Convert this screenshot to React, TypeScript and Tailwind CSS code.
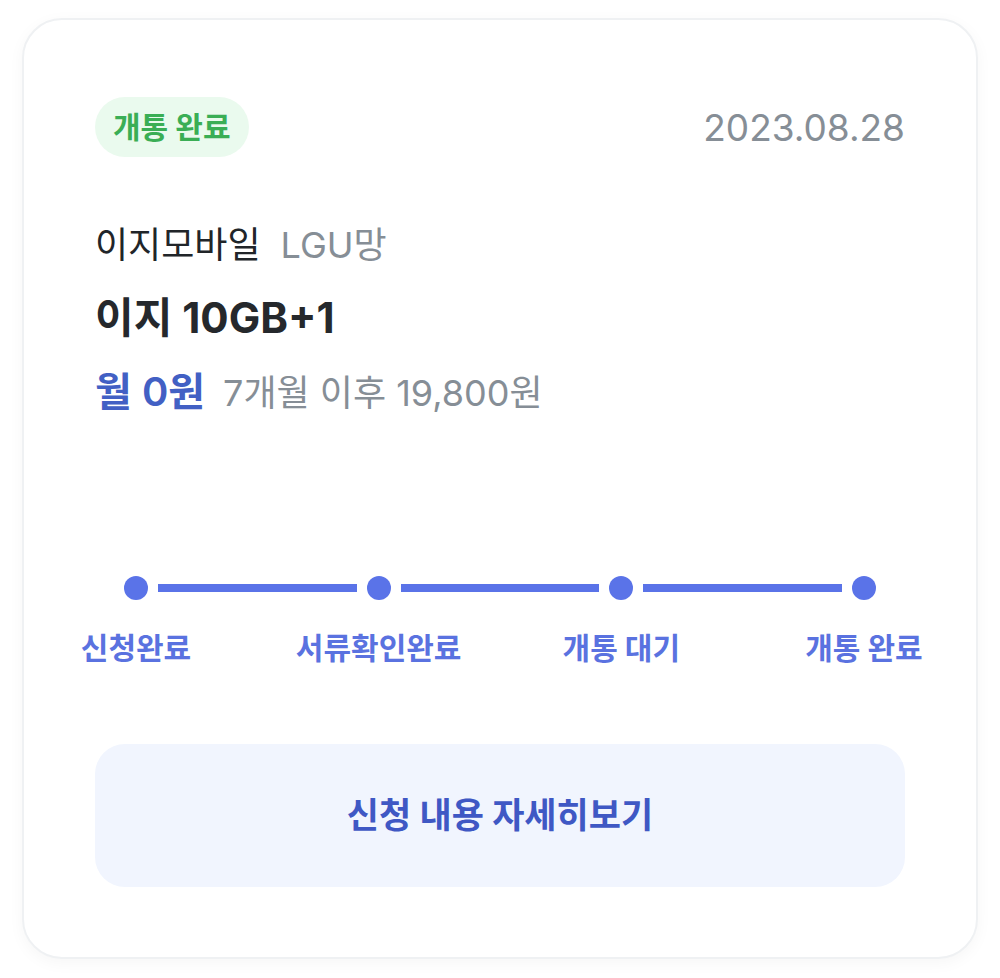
const steps = ["신청완료", "서류확인완료", "개통 대기", "개통 완료"];

function Progress() {
  return (
    <div className="px-[29px]">
      <div className="flex items-center">
        {steps.map((s, i) => (
          <div key={s} className={i < steps.length - 1 ? "flex flex-1 items-center" : "flex items-center"}>
            <div className="h-6 w-6 shrink-0 rounded-full bg-[#5a73e8]" />
            {i < steps.length - 1 && <div className="mx-[10px] h-2 flex-1 bg-[#5a73e8]" />}
          </div>
        ))}
      </div>
      <div className="mt-[28px] flex justify-between">
        {steps.map((s) => (
          <div key={s} className="flex w-6 justify-center">
            <span className="whitespace-nowrap text-[30px] font-bold leading-[40px] text-[#5a72e0]">{s}</span>
          </div>
        ))}
      </div>
    </div>
  );
}

export default function App() {
  return (
    <div
      className="min-h-[978px] bg-white px-[22px] pt-[18px] pb-[20px]"
      style={{ fontFamily: 'Inter, "Noto Sans CJK KR", sans-serif' }}
    >
      <div className="rounded-[40px] border-2 border-[#eff1f3] bg-white px-[71px] pt-[77px] pb-[70px] shadow-[0_4px_16px_rgba(0,0,0,0.04)]">
        <div className="flex h-[60px] items-center justify-between">
          <span className="flex h-[60px] items-center rounded-full bg-[#eafaee] px-[18px] text-[30px] font-bold text-[#3aae55]">
            개통 완료
          </span>
          <span className="text-[37px] leading-none text-[#868e96]">2023.08.28</span>
        </div>

        <div className="mt-[66px] flex items-baseline gap-[20px] text-[36px] leading-[44px]">
          <span className="text-[#212529]">이지모바일</span>
          <span className="text-[#868e96]">LGU망</span>
        </div>
        <div className="mt-[29px] text-[42px] font-bold leading-[44px] text-[#25282c]">이지 10GB+1</div>
        <div className="mt-[30px] flex items-baseline gap-[18px] leading-[44px]">
          <span className="text-[40px] font-semibold text-[#4260c4]">월 0원</span>
          <span className="text-[36px] text-[#868e96]">7개월 이후 19,800원</span>
        </div>

        <div className="mt-[161px]">
          <Progress />
        </div>

        <button className="mt-[76px] flex h-[143px] w-full items-center justify-center rounded-[30px] bg-[#f1f5fe] text-[35px] font-bold text-[#3f58c4]">
          신청 내용 자세히보기
        </button>
      </div>
    </div>
  );
}
